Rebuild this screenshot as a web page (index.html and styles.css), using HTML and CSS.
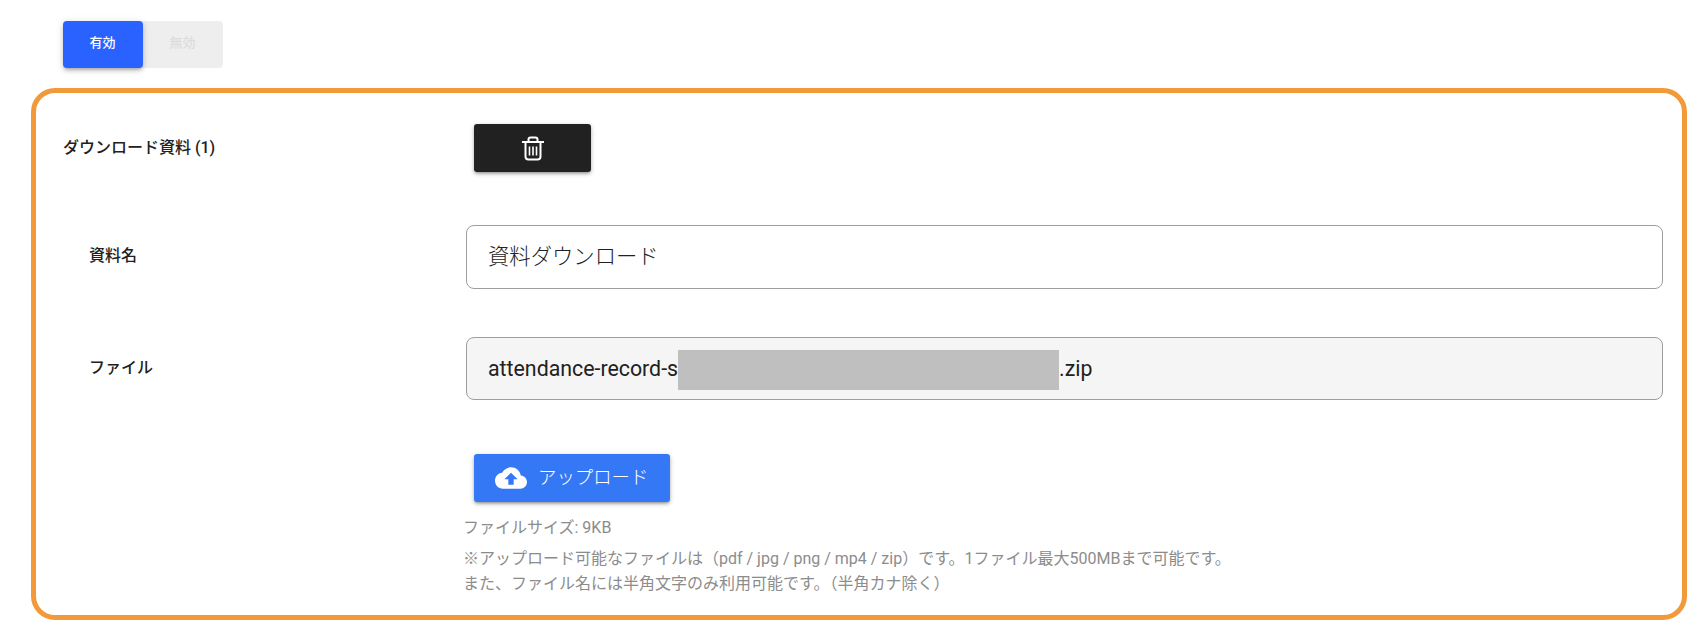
FILE: index.html
```html
<!DOCTYPE html>
<html lang="ja">
<head>
<meta charset="utf-8">
<title>ダウンロード資料</title>
<link rel="stylesheet" href="styles.css">
</head>
<body>
<div class="toggle">
  <button class="toggle-btn is-on">有効</button>
  <button class="toggle-btn is-off">無効</button>
</div>
<section class="panel">
  <div class="row row-head">
    <div class="label label-main">ダウンロード資料 (1)</div>
    <div class="content">
      <button class="btn btn-dark" aria-label="削除">
        <svg class="icon-trash" viewBox="0 0 22 24" fill="none" stroke="#fff" stroke-width="2">
          <path d="M0 5.5h22"/>
          <path d="M6.5 5V3a2 2 0 0 1 2-2h5a2 2 0 0 1 2 2v2"/>
          <path d="M3.5 5.5V20a3 3 0 0 0 3 3h9a3 3 0 0 0 3-3V5.5"/>
          <path d="M7.5 10v9M11 10v9M14.5 10v9" stroke-width="1.6"/>
        </svg>
      </button>
    </div>
  </div>
  <div class="row row-name">
    <div class="label label-sub">資料名</div>
    <div class="content">
      <div class="field field-text"><span class="field-value">資料ダウンロード</span></div>
    </div>
  </div>
  <div class="row row-file">
    <div class="label label-sub">ファイル</div>
    <div class="content">
      <div class="field field-file"><span>attendance-record-s</span><span class="redact"></span><span>.zip</span></div>
    </div>
  </div>
  <div class="row row-upload">
    <div class="label"></div>
    <div class="content">
      <button class="btn btn-blue">
        <svg class="icon-cloud" viewBox="0 0 24 24" fill="#fff"><path d="M19.35 10.04C18.67 6.59 15.64 4 12 4 9.11 4 6.6 5.64 5.35 8.04 2.34 8.36 0 10.91 0 14c0 3.31 2.69 6 6 6h13c2.76 0 5-2.24 5-5 0-2.64-2.05-4.78-4.65-4.96zM14 13v4h-4v-4H7l5-5 5 5h-3z"/></svg>
        <span>アップロード</span>
      </button>
      <p class="size">ファイルサイズ: 9KB</p>
      <p class="note">※アップロード可能なファイルは（pdf / jpg / png / mp4 / zip）です。1ファイル最大500MBまで可能です。<br>また、ファイル名には半角文字のみ利用可能です。（半角カナ除く）</p>
    </div>
  </div>
</section>
</body>
</html>
```
FILE: styles.css
```css
* { box-sizing: border-box; }
html, body { margin: 0; padding: 0; background: #fff; }
body {
  width: 1702px;
  height: 633px;
  overflow: hidden;
  font-family: Roboto, "Noto Sans CJK JP", sans-serif;
  color: #212121;
}
button { font-family: inherit; border: 0; padding: 0; margin: 0; }

.toggle {
  display: flex;
  width: 160px;
  height: 47px;
  margin: 21px 0 20px 63px;
  background: #eeeeee;
  border-radius: 4px;
}
.toggle-btn {
  width: 80px;
  height: 47px;
  font-size: 13px;
  font-weight: 500;
  padding-bottom: 7px;
  padding-right: 1px;
  border-radius: 4px;
  background: transparent;
}
.is-on {
  background: #2962ff;
  color: #fff;
  box-shadow: 0 3px 3px -2px rgba(0,0,0,.2), 0 3px 4px 0 rgba(0,0,0,.14), 0 1px 8px 0 rgba(0,0,0,.12);
}
.is-off { color: #dcdcdc; }

.panel {
  width: 1656px;
  height: 532px;
  margin-left: 31px;
  border: 5px solid #f2993a;
  border-radius: 24px;
  padding: 31px 19px 0 27px;
}
.row {
  display: grid;
  grid-template-columns: 400px 1fr;
  align-items: center;
}
.row-head { height: 48px; }
.row-name { margin-top: 53px; height: 64px; }
.row-file { margin-top: 48px; height: 63px; }
.row-upload { margin-top: 54px; align-items: start; }
.row-name .content, .row-file .content { height: 100%; }

.label { font-size: 16px; font-weight: 500; line-height: 20px; padding-bottom: 2px; }
.label-main { padding-bottom: 0; }
.label-sub { padding-left: 26px; }

.btn {
  display: flex;
  align-items: center;
  height: 48px;
  margin-left: 11px;
  border-radius: 3px;
  color: #fff;
  box-shadow: 0 2px 3px -1px rgba(0,0,0,.3), 0 2px 4px 0 rgba(0,0,0,.16), 0 1px 6px 0 rgba(0,0,0,.1);
}
.btn-dark { width: 117px; justify-content: center; background: #212121; }
.btn-blue { width: 196px; padding-left: 21px; background: #3578f6; font-size: 18.4px; font-weight: 300; }
.btn-blue span { padding-bottom: 5px; }
.icon-trash { width: 22px; height: 25px; }
.icon-cloud { width: 32px; height: 32px; margin-right: 11px; flex: none; }

.field {
  display: flex;
  align-items: center;
  height: 100%;
  margin-left: 3px;
  padding-left: 21px;
  border: 1px solid #9e9e9e;
  border-radius: 8px;
  font-size: 21.33px;
}
.field-text { color: #222; font-weight: 300; }
.field-value { padding-bottom: 5px; }
.field-file { background: #f5f5f5; }
.redact { width: 381px; height: 40px; margin-top: 3px; background: #bfbfbf; }

.size, .note { margin: 0; color: #8c8c8c; font-size: 16px; }
.size { margin-top: 16px; line-height: 20px; }
.note { margin-top: 8px; line-height: 25px; }
```
